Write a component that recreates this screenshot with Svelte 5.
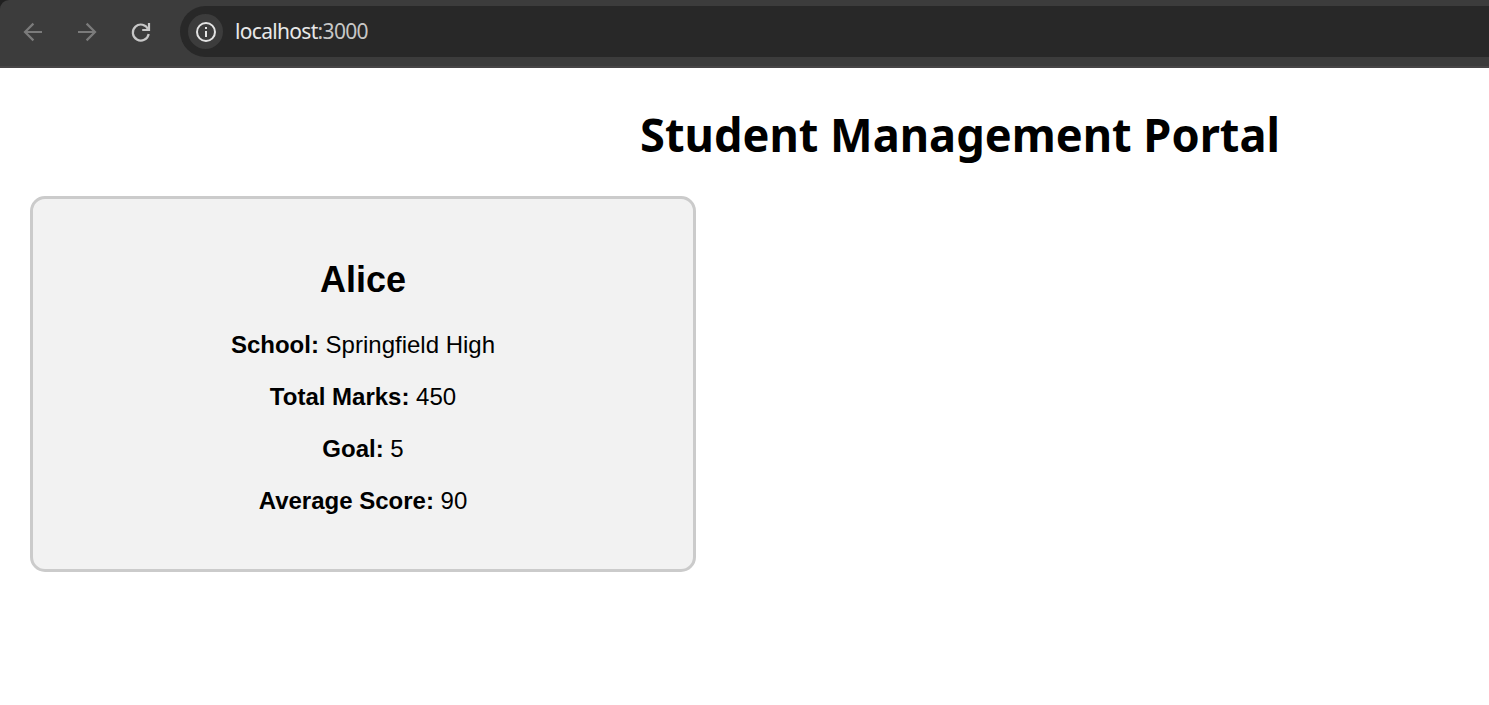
<script>
  const student = {
    name: 'Alice',
    details: [
      ['School:', 'Springfield High'],
      ['Total Marks:', '450'],
      ['Goal:', '5'],
      ['Average Score:', '90']
    ]
  };
</script>

<div class="window">
  <div class="frame">
    <header class="toolbar">
      <svg class="nav" viewBox="0 0 24 24" aria-hidden="true">
        <path d="M21 12H4.6M12.4 3.6 4 12l8.4 8.4" />
      </svg>
      <svg class="nav" viewBox="0 0 24 24" aria-hidden="true">
        <path d="M3 12h16.4M11.6 3.6 20 12l-8.4 8.4" />
      </svg>
      <svg class="nav reload" viewBox="0 0 24 24" aria-hidden="true">
        <path d="M19.2 9.4A8 8 0 1 0 19.7 14" />
        <path d="M20 3v7h-6.8" />
      </svg>
      <div class="address">
        <span class="info">
          <svg viewBox="0 0 20 20" aria-hidden="true">
            <circle cx="10" cy="10" r="9" />
            <path d="M10 9v6M10 5v2" />
          </svg>
        </span>
        <span class="url"><span class="host">localhost</span>:3000</span>
      </div>
    </header>
  </div>

  <main>
    <h1>Student Management Portal</h1>
    <section class="card">
      <h2>{student.name}</h2>
      {#each student.details as [label, value]}
        <p><b>{label}</b> {value}</p>
      {/each}
    </section>
  </main>
</div>

<style>
  :global(body) {
    margin: 0;
    background: #fff;
  }
  .window {
    height: 705px;
    overflow: hidden;
    background: #fff;
    color: #000;
  }
  .frame {
    background: #202020;
  }
  .toolbar {
    box-sizing: border-box;
    height: 68px;
    display: flex;
    align-items: flex-start;
    padding: 6px 0 0 21px;
    background: #3c3c3c;
    border-bottom: 2px solid #474546;
    border-top-left-radius: 9px;
  }
  .nav {
    flex: none;
    width: 24px;
    height: 24px;
    margin: 14px 30px 0 0;
    fill: none;
    stroke: #7b7b7b;
    stroke-width: 2.2;
  }
  .reload {
    margin-right: 27px;
    stroke: #c7c7c7;
    stroke-width: 2.2;
  }
  .address {
    flex: 1;
    box-sizing: border-box;
    height: 51px;
    display: flex;
    align-items: center;
    padding-left: 8px;
    background: #282828;
    border-radius: 26px 0 0 26px;
  }
  .info {
    width: 35px;
    height: 35px;
    display: flex;
    align-items: center;
    justify-content: center;
    border-radius: 50%;
    background: #3c3c3c;
  }
  .info svg {
    width: 20px;
    height: 20px;
    fill: none;
    stroke: #e3e3e3;
    stroke-width: 2;
  }
  .url {
    margin-left: 12px;
    padding-bottom: 1px;
    font: 21px/30px 'Noto Sans', 'Open Sans', sans-serif;
    letter-spacing: -0.68px;
    color: #c7c7c7;
  }
  .host {
    color: #e8e8e8;
  }
  main {
    width: 1920px;
  }
  h1 {
    box-sizing: border-box;
    margin: 0;
    padding-top: 33px;
    height: 128px;
    text-align: center;
    font: 700 47px/66px 'Noto Sans', 'Open Sans', sans-serif;
    transform: scaleX(0.961);
  }
  .card {
    box-sizing: border-box;
    width: 666px;
    height: 376px;
    margin-left: 30px;
    padding: 30px;
    border: 3px solid #cbcbcb;
    border-radius: 15px;
    background: #f2f2f2;
    text-align: center;
    font: 24px/28px 'Liberation Sans', Arial, sans-serif;
  }
  h2 {
    margin: 30px 0 31px;
    font-size: 36px;
    line-height: 41px;
  }
  p {
    margin: 0 0 24px;
  }
</style>
